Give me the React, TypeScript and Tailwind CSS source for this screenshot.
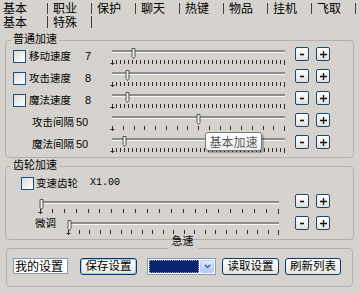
import React from 'react';

const tabsTop = ['基本', '职业', '保护', '聊天', '热键', '物品', '挂机', '飞取'];
const tabsBottom = ['基本', '特殊'];

function Thumb() {
  return (
    <svg width="5" height="11" viewBox="0 0 5 11" className="block">
      <path d="M1 0.5 H4 V8.5 L2.5 10.5 L1 8.5 Z" fill="#efeee9" stroke="#555" />
    </svg>
  );
}

function FirstTick() {
  return (
    <svg width="1" height="5" viewBox="0 0 1 5" className="block overflow-visible">
      <path d="M0.5 0 V5 M-1.5 3.5 H2.5" stroke="#2a2a2a" strokeWidth="1" />
    </svg>
  );
}

type SliderProps = { w: string; thumb: number; ticks: number; top: string; gap: string };

function Slider({ w, thumb, ticks, top, gap }: SliderProps) {
  return (
    <div className={`relative shrink-0 ${w} ${top}`}>
      <div className="h-[3px] border-t-2 border-[#8d8d8d] bg-[#fbfbfb]" />
      <div className={`flex items-start justify-between ${gap}`}>
        {Array.from({ length: ticks + 1 }, (_, i) =>
          i === 0 ? (
            <FirstTick key={i} />
          ) : (
            <span key={i} className={`block w-px bg-[#2e2e2e] ${i === ticks ? 'h-[5px]' : 'h-[4px]'}`} />
          )
        )}
      </div>
      <div className="absolute top-[-2px]" style={{ left: thumb - 2 }}>
        <Thumb />
      </div>
    </div>
  );
}

function CheckBox() {
  return <div className="h-[13px] w-[13px] border border-[#1c5180] bg-gradient-to-br from-[#dcdcd7] to-white" />;
}

function MiniBtn({ plus }: { plus?: boolean }) {
  return (
    <div className="flex h-[14px] w-[14px] shrink-0 items-center justify-center rounded-[2px] border border-[#21456e] bg-gradient-to-b from-white to-[#e2e1da]">
      {plus ? (
        <svg width="7" height="7" viewBox="0 0 7 7">
          <path d="M0 3.5H7M3.5 0V7" stroke="#111" strokeWidth="1.3" />
        </svg>
      ) : (
        <svg width="6" height="7" viewBox="0 0 6 7">
          <path d="M1 3.5H5" stroke="#111" strokeWidth="1.6" />
        </svg>
      )}
    </div>
  );
}

function PlusMinus({ mt, ml }: { mt: string; ml: string }) {
  return (
    <div className={`flex gap-[7px] ${mt} ${ml}`}>
      <MiniBtn />
      <MiniBtn plus />
    </div>
  );
}

function XpButton({ label, focus }: { label: string; focus?: boolean }) {
  return (
    <div
      className={`flex h-[17px] shrink-0 items-center justify-center rounded-[3px] border border-[#003c74] bg-gradient-to-b from-white to-[#e6e4dc] text-[11.5px] leading-none ${
        focus ? 'shadow-[inset_0_0_0_1px_#a9c3ee]' : ''
      }`}
    >
      {label}
    </div>
  );
}

type SpeedRowProps = { check?: boolean; label: string; value: string; thumb: number; ticks: number };

function SpeedRow({ check, label, value, thumb, ticks }: SpeedRowProps) {
  return (
    <div className="flex h-[22px] items-start">
      <div className="w-[16px] shrink-0 pt-[4px]">{check && <CheckBox />}</div>
      <div className="flex w-[83px] shrink-0 items-start pt-[3px] text-[10.5px] leading-[14px]">
        <span className={check ? 'w-[56px]' : 'w-[47px] pl-[3px]'}>{label}</span>
        <span className="font-['Liberation_Sans',sans-serif] text-[11px]">{value}</span>
      </div>
      <Slider w="w-[173px]" thumb={thumb} ticks={ticks} top="mt-[4px]" gap="mt-[7px]" />
      <PlusMinus mt="mt-[1px]" ml="ml-[10px]" />
    </div>
  );
}

export default function App() {
  return (
    <div className="relative h-[293px] w-[360px] overflow-hidden bg-[#d6d3ce] font-['Noto_Sans_CJK_SC','Noto_Sans',sans-serif] text-black">
      {/* tabs */}
      <div className="flex h-[14px]">
        {tabsTop.map((t, i) => (
          <div
            key={i}
            className={`flex h-[14px] shrink-0 items-start text-[12px] ${i === 0 ? 'w-[48px] pl-[3px]' : 'w-[44px] pl-[5px]'}`}
          >
            <span className="block pt-[1px] leading-[13px]">{t}</span>
            <span className="ml-auto mt-[3px] h-[11px] w-px bg-[#3c3c3c]" />
          </div>
        ))}
      </div>
      <div className="flex h-[14px]">
        {tabsBottom.map((t, i) => (
          <div
            key={i}
            className={`flex h-[14px] shrink-0 items-start text-[12px] ${i === 0 ? 'w-[48px] pl-[3px]' : 'w-[44px] pl-[5px]'}`}
          >
            <span className="block pt-[2px] leading-[12px]">{t}</span>
            <span className="ml-auto mt-[2px] h-[12px] w-px bg-[#3c3c3c]" />
          </div>
        ))}
      </div>

      {/* 普通加速 */}
      <fieldset className="ml-[5px] mr-[6px] mt-[6px] rounded-[4px] border border-[#b5b1a8] px-[7px] pb-[1px]">
        <legend className="ml-[-2px] px-[2px] text-[11px] leading-[12px]">
          <span className="-mt-[2px] mb-[2px] block">普通加速</span>
        </legend>
        <SpeedRow check label="移动速度" value="7" thumb={21} ticks={43} />
        <SpeedRow check label="攻击速度" value="8" thumb={15} ticks={43} />
        <SpeedRow check label="魔法速度" value="8" thumb={15} ticks={43} />
        <SpeedRow label="攻击间隔" value="50" thumb={86} ticks={16} />
        <SpeedRow label="魔法间隔" value="50" thumb={12} ticks={43} />
      </fieldset>

      {/* 齿轮加速 */}
      <fieldset className="ml-[5px] mr-[6px] mt-[2px] rounded-[4px] border border-[#b5b1a8] px-[7px] pb-[3px]">
        <legend className="ml-[-2px] px-[2px] text-[11px] leading-[12px]">
          <span className="-mt-[2px] mb-[2px] block">齿轮加速</span>
        </legend>
        <div className="flex h-[22px] items-start pl-[8px]">
          <div className="mr-[2px] pt-[5px]">
            <CheckBox />
          </div>
          <span className="w-[54px] pt-[4px] text-[10.5px] leading-[14px]">变速齿轮</span>
          <span className="pt-[4px] font-['Liberation_Mono',monospace] text-[10px] leading-[14px]">X1.00</span>
        </div>
        <div className="flex h-[22px] items-start pl-[27px]">
          <Slider w="w-[239px]" thumb={1} ticks={20} top="mt-[7px]" gap="mt-[5px]" />
          <PlusMinus mt="mt-0" ml="ml-[16px]" />
        </div>
        <div className="flex h-[20px] items-start pl-[22px]">
          <span className="w-[33px] text-[10.5px] leading-[14px]">微调</span>
          <Slider w="w-[211px]" thumb={1} ticks={20} top="mt-[6px]" gap="mt-[5px]" />
          <PlusMinus mt="mt-0" ml="ml-[16px]" />
        </div>
      </fieldset>

      {/* 急速 */}
      <fieldset className="ml-[6px] mr-[7px] mt-[2px] rounded-[4px] border border-[#b5b1a8] pb-[8px] pl-[6px]">
        <legend className="mx-auto px-[4px] text-[11px] leading-[12px]">
          <span className="-mt-[8px] mb-[8px] block">急速</span>
        </legend>
        <div className="flex h-[24px] items-center">
          <div className="flex h-[16px] w-[55px] shrink-0 items-center border border-[#7f9db9] bg-white pl-[1px] text-[12px] leading-none">
            我的设置
          </div>
          <div className="ml-[12px] w-[57px]">
            <XpButton label="保存设置" focus />
          </div>
          <div className="ml-[10px] flex h-[17px] w-[69px] shrink-0 border border-[#7f9db9] bg-white p-[1px]">
            <div className="flex-1 border border-dotted border-[#9aa9c9] bg-[#0b2470]" />
            <div className="ml-[1px] flex w-[14px] items-center justify-center rounded-[2px] border border-[#b9ccf3] bg-gradient-to-b from-[#e1eafe] to-[#b4c9f4]">
              <svg width="7" height="5" viewBox="0 0 7 5">
                <path d="M0.8 0.8 L3.5 3.6 L6.2 0.8" fill="none" stroke="#4d6185" strokeWidth="1.4" />
              </svg>
            </div>
          </div>
          <div className="ml-[6px] w-[57px]">
            <XpButton label="读取设置" />
          </div>
          <div className="ml-[6px] w-[56px]">
            <XpButton label="刷新列表" />
          </div>
        </div>
      </fieldset>

      {/* tooltip */}
      <div className="absolute left-[205px] top-[132px] flex h-[19px] w-[57px] items-center justify-center rounded-[3px] border border-[#7a7a7a] bg-gradient-to-b from-white to-[#eeeeee] text-[12px] leading-none text-[#5a5a5a] shadow-[2px_2px_1px_rgba(0,0,0,0.25)]">
        基本加速
      </div>
    </div>
  );
}
